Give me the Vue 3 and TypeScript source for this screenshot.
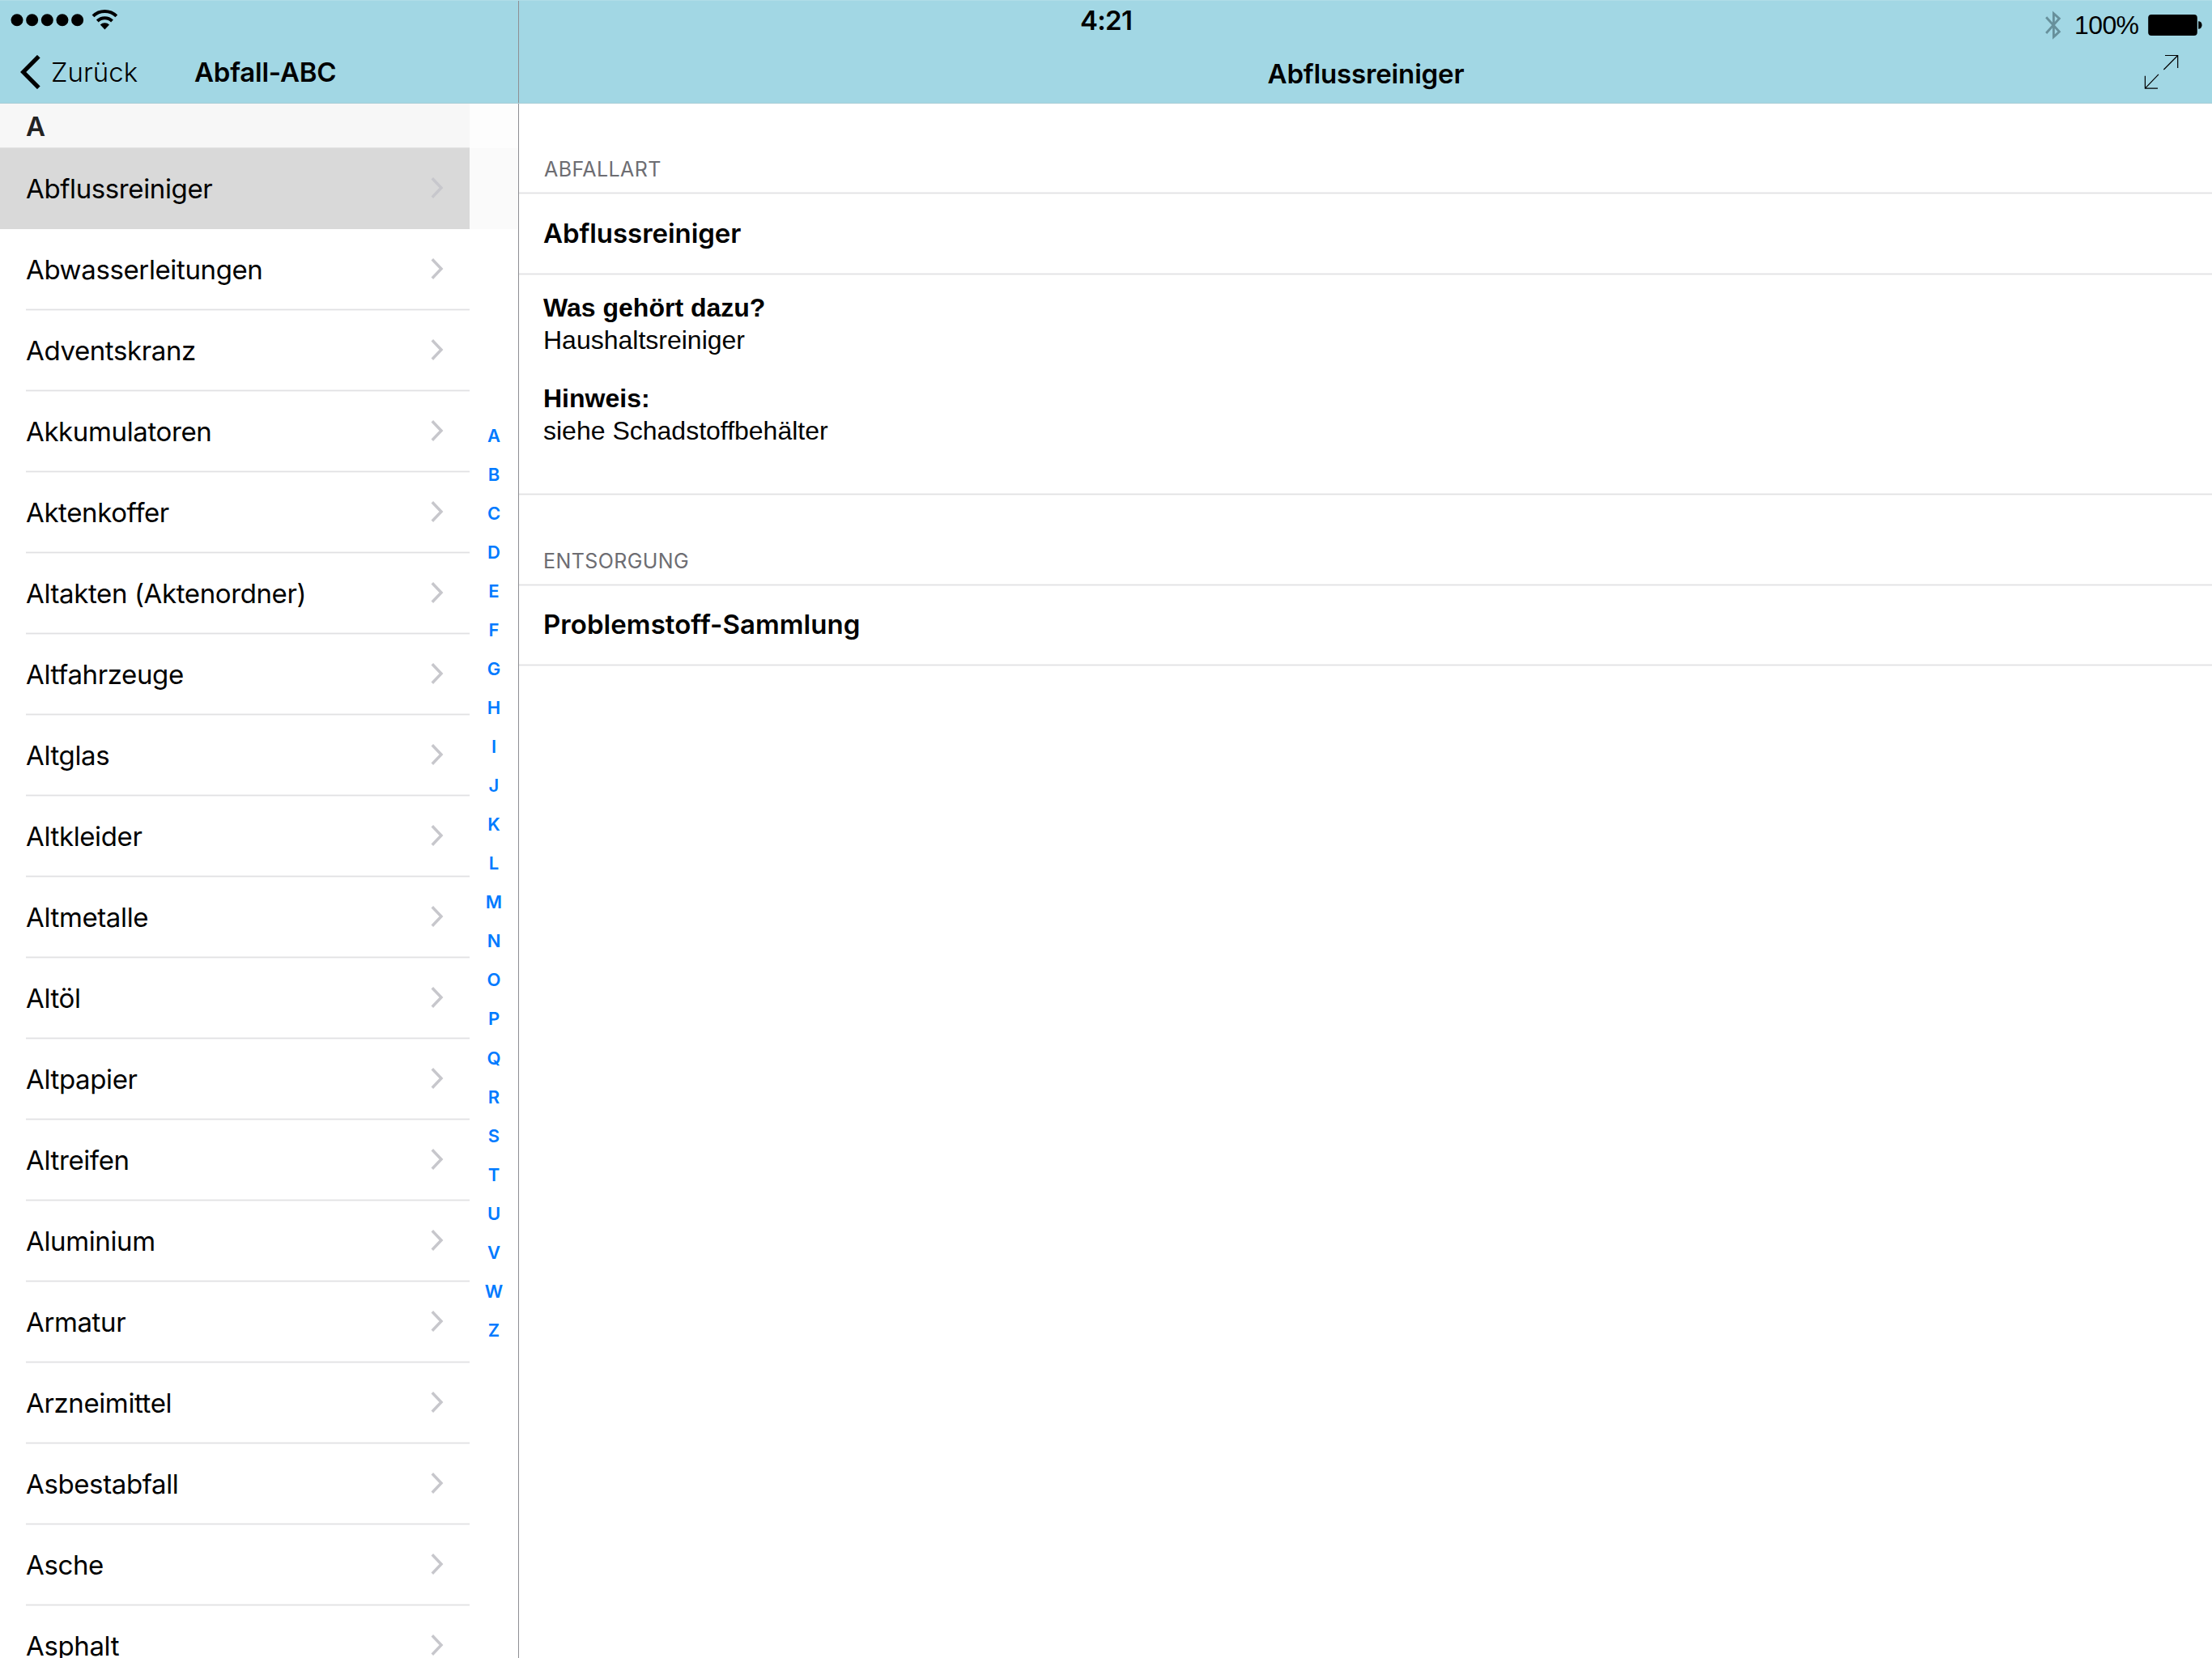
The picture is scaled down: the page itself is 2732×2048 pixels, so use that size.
<script setup lang="ts">
const entries: string[] = [
  'Abflussreiniger', 'Abwasserleitungen', 'Adventskranz', 'Akkumulatoren', 'Aktenkoffer',
  'Altakten (Aktenordner)', 'Altfahrzeuge', 'Altglas', 'Altkleider', 'Altmetalle', 'Altöl',
  'Altpapier', 'Altreifen', 'Aluminium', 'Armatur', 'Arzneimittel', 'Asbestabfall', 'Asche', 'Asphalt',
]
const selected = 'Abflussreiniger'
const letters: string[] = 'ABCDEFGHIJKLMNOPQRSTUVWZ'.split('')
</script>

<template>
  <div class="screen">
    <header class="top">
      <div class="top-left">
        <div class="signal">
          <svg width="150" height="44" viewBox="0 0 150 44">
            <circle v-for="i in 5" :key="i" :cx="21 + (i - 1) * 18.65" cy="24.7" r="7.5" />
            <g fill="none" stroke="#000" stroke-width="4">
              <path d="M115 19.9A20.5 20.5 0 0 1 143.8 19.9" />
              <path d="M120.3 26A13 13 0 0 1 138.5 26" />
            </g>
            <path d="M123.8 30.6A8 8 0 0 1 135 30.6L129.4 36.6Z" />
          </svg>
        </div>
        <div class="nav">
          <svg class="back" width="26" height="42" viewBox="0 0 26 42">
            <path d="M22.8 1.7L3.7 21L22.8 40.3" fill="none" stroke="#000" stroke-width="5.2" />
          </svg>
          <span class="back-label">Zurück</span>
          <span class="list-title">Abfall-ABC</span>
        </div>
      </div>
      <div class="top-right">
        <div class="status">
          <span class="clock">4:21</span>
          <div class="power">
            <svg class="bt" width="20" height="36" viewBox="0 0 20 36">
              <path d="M1.2 8.2L17.4 26.2L10.4 32.6V3.6L17.4 9.8L1.2 28" fill="none" stroke="#67909b" stroke-width="2.8" />
            </svg>
            <span class="percent">100%</span>
            <svg class="battery" width="67" height="28" viewBox="0 0 67 28">
              <rect x="0.2" y="1" width="60.6" height="26" rx="4" />
              <path d="M62.2 9.2a4.4 4.8 0 0 1 0 9.6z" />
            </svg>
          </div>
        </div>
        <div class="detail-nav">
          <span class="detail-title">Abflussreiniger</span>
          <svg class="expand" width="44" height="44" viewBox="0 0 44 44" fill="none" stroke="#000" stroke-width="1.2">
            <path d="M26 1.5H41.7V17M41.7 1.5L24.4 19M1.4 26.7V42.2H17M1.4 42.2L18 24.8" />
          </svg>
        </div>
      </div>
    </header>

    <main class="body">
      <div class="sidebar">
        <div class="list">
          <div class="section">A</div>
          <div v-for="entry in entries" :key="entry" class="row" :class="{ active: entry === selected }">
            <div class="cell">
              <span class="name">{{ entry }}</span>
              <svg class="chev" width="16" height="28" viewBox="0 0 16 28">
                <path d="M1.8 2.2L13 14L1.8 25.8" fill="none" stroke="#c7c7cc" stroke-width="3.5" />
              </svg>
            </div>
          </div>
        </div>
        <nav class="index">
          <div class="tint-a"></div>
          <div class="tint-b"></div>
          <div class="letters">
            <span v-for="l in letters" :key="l">{{ l }}</span>
          </div>
        </nav>
      </div>

      <section class="detail">
        <h2 class="group first"><span>ABFALLART</span></h2>
        <div class="item"><span>Abflussreiniger</span></div>
        <div class="info">
          <b>Was gehört dazu?</b>
          <p>Haushaltsreiniger</p>
          <b class="second">Hinweis:</b>
          <p>siehe Schadstoffbehälter</p>
        </div>
        <h2 class="group"><span>ENTSORGUNG</span></h2>
        <div class="item last"><span>Problemstoff-Sammlung</span></div>
      </section>
    </main>
  </div>
</template>

<style>
html, body { margin: 0; overflow: hidden; background: #fff; }
</style>

<style scoped>
.screen {
  width: 2732px; height: 2048px; overflow: hidden;
  display: flex; flex-direction: column;
  background: #fff; color: #000;
  font-family: Inter, "Liberation Sans", sans-serif;
}
.screen * { box-sizing: border-box; }
span, b, p { white-space: nowrap; }
svg { display: block; flex: none; }

.top { height: 128px; flex: none; display: flex; background: #a2d7e4; border-top: 1px solid #b0dde8; border-bottom: 1px solid #a9cdd6; }
.top-left { width: 641px; flex: none; border-right: 1px solid #8e8e93; }
.signal { height: 44px; margin-top: -1px; }
.nav { display: flex; height: 82px; align-items: flex-start; padding-left: 25px; }
.back { margin-top: 24px; }
.back-label { font-size: 33px; line-height: 40px; font-weight: 300; margin: 25px 0 0 12px; width: 177px; }
.list-title { font-size: 33px; line-height: 40px; font-weight: 600; margin-top: 25px; letter-spacing: -0.2px; }

.top-right { flex: 1; display: flex; flex-direction: column; }
.status { height: 54px; display: flex; justify-content: space-between; }
.clock { font-size: 33px; line-height: 40px; font-weight: 600; margin: 4px 0 0 693px; letter-spacing: -0.7px; }
.power { display: flex; margin-right: 12px; }
.bt { margin-top: 12px; }
.percent { font: 32px/40px "Liberation Sans", sans-serif; letter-spacing: -0.6px; margin: 10px 0 0 16px; width: 91px; }
.battery { margin-top: 16px; }
.detail-nav { flex: 1; display: flex; justify-content: flex-end; }
.detail-title { flex: 1; text-align: center; padding-left: 85px; font-size: 33px; line-height: 40px; font-weight: 600; margin-top: 16px; letter-spacing: -0.15px; }
.expand { margin: 12px 40px 0 0; }

.body { flex: 1; display: flex; min-height: 0; }
.sidebar { width: 641px; flex: none; display: flex; border-right: 1px solid #8e8e93; overflow: hidden; }
.list { width: 580px; flex: none; }
.section { height: 55px; background: #f7f7f7; border-bottom: 1px solid #e4e4e4; color: #222; font-size: 33px; line-height: 40px; font-weight: 600; padding: 8px 0 0 32px; }
.row { height: 100px; padding-left: 32px; }
/* hairline separators: a solid pixel with a faint one on either side */
.cell, .group, .item, .info { border-bottom: 1px solid #e1e1e3; box-shadow: 0 1px 0 #f3f3f4, inset 0 -1px 0 #f3f3f4; }
.cell { height: 100px; display: flex; align-items: center; justify-content: space-between; padding-right: 32px; }
.chev { margin-bottom: 2px; }
.name { font-size: 33px; line-height: 40px; margin-top: 1px; letter-spacing: -0.38px; }
.active { background: #d9d9d9; }
.active .cell { border-color: #d9d9d9; box-shadow: none; }
.index { flex: 1; }
.tint-a { height: 55px; background: #fdfdfd; }
.tint-b { height: 100px; background: #fafafa; }
.letters { display: flex; flex-direction: column; align-items: center; margin-top: 231px; color: #007aff; font-size: 22px; font-weight: 600; }
.letters span { height: 48.04px; line-height: 48.04px; }

.detail { flex: 1; background: #fff; }
.group { margin: 0; height: 112px; font-size: 25px; line-height: 32px; font-weight: 400; letter-spacing: 0.4px; color: #6d6d72; padding: 66px 0 0 30px; }
.group.first { height: 111px; padding: 65px 0 0 31px; }
.group span { display: block; }
.item { height: 100px; padding: 29px 0 0 30px; font-size: 33px; line-height: 40px; font-weight: 600; letter-spacing: -0.05px; }
.item.last { height: 99px; padding-top: 28px; letter-spacing: 0.06px; }
.info { height: 272px; padding: 21px 0 0 30px; font: 32px/40px "Liberation Sans", sans-serif; }
.info b, .info p { display: block; margin: 0; }
.info .second { margin-top: 32px; }
</style>
